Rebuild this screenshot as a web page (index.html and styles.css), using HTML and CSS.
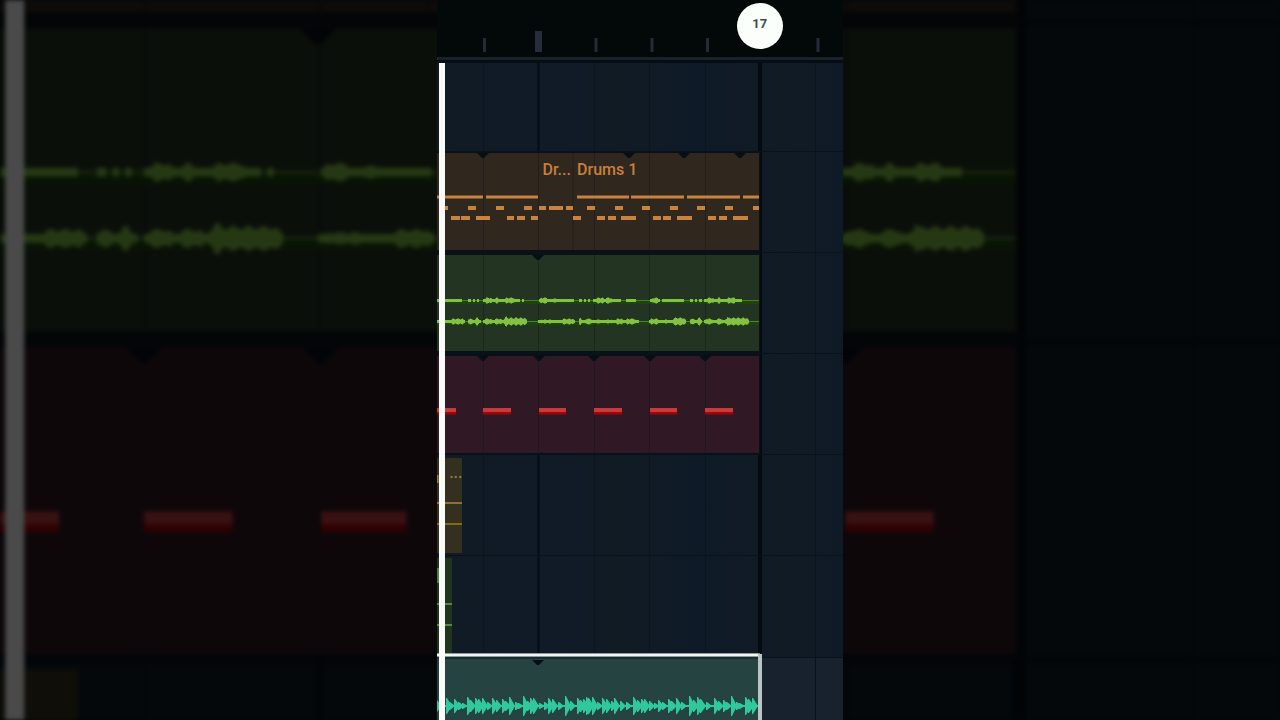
FILE: index.html
```
<!DOCTYPE html>
<html lang="en">
<head>
    <meta charset="UTF-8">
    <meta name="viewport" content="width=device-width, initial-scale=1.0">
    <title>Playlist</title>
    <link rel="stylesheet" href="styles.css">
</head>
<body>
    <!-- Backdrop: enlarged and dimmed playlist -->
    <svg class="backdrop" viewBox="0 246 406 228" preserveAspectRatio="xMidYMid slice" aria-hidden="true">
        <defs>
            <path id="marker" d="M-6 0H6L1 5H-1Z" fill="#060f18"/>
            <g id="grid">
                <path d="M46.5 0V101M157.5 0V101M212.5 0V101M268.5 0V101M378.5 0V101" stroke="#0a151e" stroke-width="1"/>
                <path d="M101.5 0V101" stroke="#040c14" stroke-width="2"/>
                <path d="M323 0V101" stroke="#030a10" stroke-width="4"/>
                <path d="M0 101H406" stroke="#08121b" stroke-width="2"/>
            </g>
            <g id="clip-lines" stroke="#08101a" opacity=".35">
                <path d="M46.5 0V98M101.5 0V98M157.5 0V98M212.5 0V98M268.5 0V98"/>
            </g>

            <g id="drums">
                <use href="#grid"/>
                <rect y="-1" width="323" height="101" fill="#0a1015"/>
                <rect y="1" width="322" height="97" fill="#30271f"/>
                <use href="#clip-lines"/>
                <path d="M136 0V98" stroke="#08101a" opacity=".35"/>
                <use href="#marker" x="46" y="1"/>
                <use href="#marker" x="192" y="1"/>
                <use href="#marker" x="247" y="1"/>
                <use href="#marker" x="303" y="1"/>
                <g id="drum-notes">
                    <path d="M0 45H46M49 45H101M140 45H192M194 45H247M250 45H303M306 45H322" stroke-width="3"/>
                    <path d="M8 56H11M31 56H39M59 56H67M87 56H95M102 56H109M112 56H126M129 56H136M150 56H158M178 56H186M205 56H213M233 56H241M260 56H268M288 56H296M316 56H322" stroke-width="4"/>
                    <path d="M14 66H23M24 66H33M39 66H53M70 66H77M80 66H88M94 66H101M136 66H144M160 66H168M171 66H179M184 66H199M216 66H224M226 66H234M240 66H255M271 66H279M282 66H290M296 66H311" stroke-width="4"/>
                </g>
            </g>

            <g id="vocals">
                <use href="#grid"/>
                <rect y="-1" width="323" height="101" fill="#0a1218"/>
                <rect y="2" width="322" height="96" fill="#243422"/>
                <use href="#clip-lines"/>
                <use href="#marker" x="101" y="2"/>
                <path d="M0 49H322M0 70H322" stroke="#1a4708" stroke-width="4"/>
                <path d="M0 47.5H322" stroke="#4d7a29" stroke-width="1"/>
                <path d="M0 68.5H322" stroke="#567a48" stroke-width="1"/>
                <path id="wave-left" fill="#83c142"/>
                <path id="wave-right" fill="#83c142"/>
            </g>

            <g id="bass">
                <use href="#grid"/>
                <rect y="-1" width="323" height="101" fill="#0a1018"/>
                <rect y="2" width="322" height="97" fill="#301924"/>
                <use href="#clip-lines"/>
                <use href="#marker" x="46" y="2"/>
                <use href="#marker" x="102" y="2"/>
                <use href="#marker" x="157" y="2"/>
                <use href="#marker" x="213" y="2"/>
                <use href="#marker" x="268" y="2"/>
                <path d="M0 58H19M46 58H74M102 58H129M157 58H185M213 58H240M268 58H296" stroke="#a30406" stroke-width="5"/>
                <path d="M0 56H19M46 56H74M102 56H129M157 56H185M213 56H240M268 56H296" stroke="#c33c3e" stroke-width="4"/>
            </g>

            <g id="keys">
                <use href="#grid"/>
                <rect y="3" width="25" height="95" fill="#333020"/>
                <path d="M0 48H25" stroke="#8c7034" stroke-width="2"/>
                <path d="M0 69H25" stroke="#7f6a18" stroke-width="2"/>
                <path d="M0 20V28" stroke="#9a8320" stroke-width="3"/>
            </g>
        </defs>

        <rect y="240" width="406" height="240" fill="#101b26"/>
        <use href="#drums" y="152"/>
        <use href="#vocals" y="253"/>
        <use href="#bass" y="354"/>
        <use href="#keys" y="455"/>
        <rect x="2" y="240" width="6" height="240" fill="#fff"/>
    </svg>

    <main class="playlist">
        <header class="ruler">
            <svg viewBox="0 0 406 56" aria-hidden="true">
                <path d="M47.5 38V52M159 38V52M215 38V52M270.5 38V52M381 38V52" stroke="#252c37" stroke-width="3"/>
                <path d="M101.5 31V52" stroke="#252c3a" stroke-width="7"/>
            </svg>
            <span class="bar-number">17</span>
        </header>

        <div class="tracks">
            <section class="track">
                <svg viewBox="0 0 406 101" preserveAspectRatio="xMinYMax slice"><use href="#grid"/></svg>
            </section>
            <section class="track">
                <svg viewBox="0 0 406 101"><use href="#drums"/></svg>
                <span class="clip-name clip-short">Dr...</span>
                <span class="clip-name">Drums 1</span>
            </section>
            <section class="track">
                <svg viewBox="0 0 406 101"><use href="#vocals"/></svg>
            </section>
            <section class="track">
                <svg viewBox="0 0 406 101"><use href="#bass"/></svg>
            </section>
            <section class="track track-keys">
                <svg viewBox="0 0 406 101"><use href="#keys"/></svg>
                <span class="clip-name">...</span>
            </section>
            <section class="track">
                <svg viewBox="0 0 406 97" preserveAspectRatio="xMinYMin slice">
                    <use href="#grid"/>
                    <rect y="2" width="15" height="96" fill="#203420"/>
                    <path d="M0 48H15M0 69H15" stroke="#568a36" stroke-width="2"/>
                    <path d="M1 12V27" stroke="#4c8626" stroke-width="2"/>
                </svg>
            </section>
            <section class="track">
                <svg viewBox="0 0 406 67" preserveAspectRatio="xMinYMin slice">
                    <rect x="325" y="5" width="81" height="62" fill="#18222f"/>
                    <path d="M325 4.5H406M378.5 0V67" stroke="#08121b"/>
                    <rect width="322" height="67" fill="#254340"/>
                    <rect y="4" width="322" height="2" fill="#1c2b30"/>
                    <use href="#marker" x="101" y="7"/>
                    <path id="wave-synth" fill="#2fc99c"/>
                    <path d="M0 2H323" stroke="#f2f5f3" stroke-width="3"/>
                    <path d="M323 1V67" stroke="#b9c4c3" stroke-width="4"/>
                </svg>
            </section>
            <div class="playhead"></div>
        </div>
    </main>

    <script>
        // [start, end, half height]
        const left = [
            [0, 25, 1], [31, 34, 1], [36, 38, 1], [40, 42, 1], [46, 83, 1], [47, 56, 3], [57, 63, 3], [67, 79, 3],
            [85, 87, 1], [102, 137, 1], [102, 112, 3], [114, 122, 2], [142, 145, 1], [147, 149, 1], [151, 153, 1],
            [156, 184, 1], [158, 168, 3], [167, 176, 3], [189, 199, 1], [213, 223, 1], [214, 223, 3], [225, 247, 1],
            [253, 256, 1], [258, 260, 1], [262, 265, 1], [267, 305, 1], [269, 278, 3], [279, 285, 3], [289, 300, 3]
        ];
        const right = [
            [0, 28, 1], [13, 28, 3], [31, 44, 1], [31, 36, 4], [37, 43, 4], [46, 88, 1], [46, 56, 3], [56, 66, 3],
            [66, 72, 5], [68, 90, 4], [101, 138, 1], [102, 118, 2], [124, 138, 3], [142, 145, 6], [145, 202, 1],
            [147, 156, 3], [157, 166, 2], [167, 177, 2], [178, 187, 3], [188, 200, 3], [212, 249, 1], [212, 223, 3],
            [226, 233, 2], [235, 249, 4], [253, 265, 1], [253, 258, 4], [259, 265, 4], [267, 311, 1], [267, 277, 3],
            [278, 287, 3], [288, 293, 5], [290, 312, 4]
        ];
        // [position, half height]
        const hits = [
            [0, 6], [10, 8], [13, 4], [18, 7], [22, 4], [26, 3], [31, 9], [34, 6], [39, 8], [42, 7], [46, 8],
            [51, 4], [56, 8], [60, 6], [66, 7], [69, 5], [73, 9], [79, 4], [82, 3], [87, 10], [91, 5], [94, 8],
            [97, 8], [103, 3], [108, 4], [112, 8], [116, 7], [122, 4], [129, 10], [134, 5], [141, 8], [144, 6],
            [147, 7], [150, 9], [152, 8], [156, 9], [161, 4], [166, 8], [170, 7], [175, 5], [178, 8], [184, 5],
            [190, 4], [197, 9], [201, 6], [205, 7], [208, 7], [213, 5], [218, 3], [222, 6], [226, 4], [232, 7],
            [235, 5], [240, 8], [245, 4], [253, 10], [257, 6], [261, 9], [264, 7], [270, 4], [278, 8], [282, 5],
            [287, 6], [290, 4], [295, 10], [300, 4], [303, 3], [309, 9], [312, 7], [316, 8]
        ];

        // One column per pixel, tapered at both ends of a part
        function drawParts(id, mid, parts) {
            let d = '';
            parts.forEach(([start, end, height]) => {
                for (let x = start; x < end; x++) {
                    const edge = Math.min(1, (Math.min(x - start, end - 1 - x) + 2) / 4);
                    const wobble = 0.85 + 0.15 * Math.sin(x * 1.3);
                    const h = Math.max(1.4, Math.round(height * edge * wobble * 10) / 10);
                    d += `M${x} ${mid - h}h1v${h * 2}h-1z`;
                }
            });
            document.getElementById(id).setAttribute('d', d);
        }

        function drawHits(id, mid, peaks) {
            let d = `M0 ${mid - 1}H322V${mid + 1}H0Z`;
            peaks.forEach(([x, h]) => {
                d += `M${x - 1} ${mid}L${x - 1} ${mid - h}H${x}L${x + 2} ${mid - h * 0.6}L${x + 5} ${mid}`;
                d += `L${x + 2} ${mid + h * 0.6}L${x} ${mid + h}H${x - 1}Z`;
            });
            document.getElementById(id).setAttribute('d', d);
        }

        drawParts('wave-left', 47.5, left);
        drawParts('wave-right', 68.5, right);
        drawHits('wave-synth', 53, hits);
    </script>
</body>
</html>
```
FILE: styles.css
```
/* General Styles */
* {
    margin: 0;
    padding: 0;
    box-sizing: border-box;
}

body {
    font-family: Roboto, sans-serif;
    background: #030609;
    min-height: 100vh;
    display: flex;
    justify-content: center;
    overflow: hidden;
}

svg {
    display: block;
}

.backdrop {
    position: absolute;
    inset: 0;
    width: 100%;
    height: 100%;
    filter: blur(2px) brightness(0.29);
}

#drum-notes {
    stroke: #c8833f;
}

/* Playlist */
.playlist {
    position: relative;
    height: 100vh;
    aspect-ratio: 203 / 360;
    display: grid;
    grid-template-rows: 63fr 657fr;
    background: #101b26;
    overflow: hidden;
}

.ruler {
    position: relative;
    background: linear-gradient(#030908 90%, #1a2229 90%, #1a2229 95%, #060e15 95%);
}

.ruler svg {
    width: 100%;
}

.bar-number {
    position: absolute;
    top: 3px;
    left: 80%;
    width: 46px;
    height: 46px;
    margin-left: -25px;
    border-radius: 50%;
    background: #fafffb;
    color: #454a48;
    font-size: 13px;
    font-weight: 700;
    line-height: 42px;
    text-align: center;
}

/* Tracks */
.tracks {
    position: relative;
    min-height: 0;
    display: grid;
    grid-template-rows: 89fr repeat(4, 101fr) 97fr 67fr;
    background: linear-gradient(90deg, #101b25, #111a27 30%, #101b24 45%, #0f1a28 65%, #101b24 85%, #0f1a27);
}

.track {
    position: relative;
    min-height: 0;
}

.track svg {
    width: 100%;
    height: 100%;
}

.clip-name {
    position: absolute;
    top: 8px;
    left: 34.5%;
    color: #c8803a;
    font-size: 16px;
    font-weight: 500;
    line-height: 20px;
}

.clip-short {
    left: 26%;
}

.track-keys .clip-name {
    left: 3%;
    color: #94803a;
}

.playhead {
    position: absolute;
    top: 0;
    bottom: 0;
    left: 2px;
    width: 6px;
    background: #f8fbf8;
}
```
